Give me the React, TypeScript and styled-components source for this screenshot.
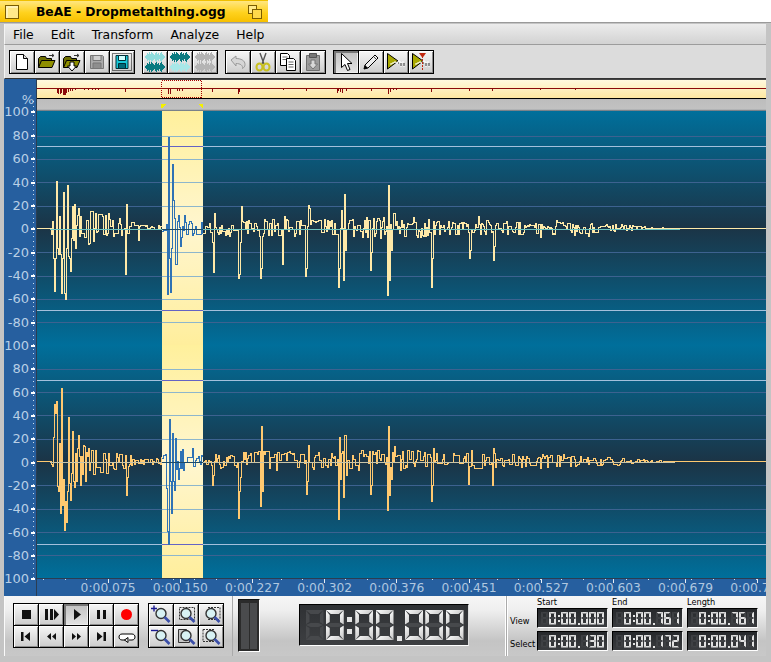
import React from 'react'
import styled, { createGlobalStyle } from 'styled-components'

const GlobalStyle = createGlobalStyle`
  html, body {
    margin: 0;
    padding: 0;
    background: #ffffff;
    overflow: hidden;
  }
  * {
    box-sizing: border-box;
  }
`

const Page = styled.div`
  width: 771px;
  height: 662px;
  display: flex;
  flex-direction: column;
  overflow: hidden;
  font-family: 'DejaVu Sans', sans-serif;
  color: #000;
`

const TitleTab = styled.div`
  width: 268px;
  height: 22px;
  flex: none;
  display: flex;
  align-items: center;
  justify-content: space-between;
  padding: 0 6px 0 5px;
  background: linear-gradient(#ffe680, #ffd21e 55%, #f7c000);
  border-top: 1px solid #f0c000;
`

const TitleText = styled.span`
  font-size: 12.3px;
  font-weight: 700;
  flex: 1;
  padding-left: 17px;
  white-space: pre;
`

const Frame = styled.div`
  flex: 1;
  min-height: 0;
  display: flex;
  flex-direction: column;
  padding: 1px 5px 6px 4px;
  background: #c4c4c4;
  border-top: 1px solid #9a9a9a;
`

const MenuBar = styled.div`
  height: 21px;
  flex: none;
  display: flex;
  align-items: center;
  padding-left: 8px;
  gap: 17px;
  font-size: 12.4px;
  background: linear-gradient(#ececec, #d2d2d2);
  border-left: 1px solid #f4f4f4;
  border-bottom: 1px solid #9c9c9c;
`

const ToolBar = styled.div`
  height: 34px;
  flex: none;
  display: flex;
  align-items: flex-start;
  padding: 5px 0 0 4px;
  gap: 7px;
  background: #dcdcdc;
  border-left: 1px solid #f4f4f4;
  border-bottom: 1px solid #333;
`

const ButtonGroup = styled.div<{ $columns: number; $height?: number }>`
  display: grid;
  grid-template-columns: repeat(${(p) => p.$columns}, 24px);
  grid-auto-rows: ${(p) => p.$height ?? 22}px;
  gap: 1px;
  padding: 1px;
  background: #000;
`

const Button = styled.div<{ $pressed?: boolean }>`
  display: flex;
  align-items: center;
  justify-content: center;
  background: ${(p) =>
    p.$pressed ? 'linear-gradient(#c0c0c0, #e4e4e4)' : 'linear-gradient(#f6f6f6, #cccccc)'};
  box-shadow: ${(p) =>
    p.$pressed
      ? 'inset 2px 2px 0 #777, inset -1px -1px 0 #eee'
      : 'inset 1px 1px 0 #fff, inset -1px -1px 0 #8c8c8c'};
`

const Workspace = styled.div`
  height: 517px;
  flex: none;
  display: flex;
`

const LeftRuler = styled.div`
  width: 33px;
  flex: none;
  background: #265f9f;
  border-right: 1px solid #2b3d52;
  overflow: hidden;
  color: #b9cfe6;
  font-size: 13px;
`

const PercentBox = styled.div`
  height: 21.8px;
  display: flex;
  align-items: flex-end;
  justify-content: flex-end;
  padding-right: 2px;
  line-height: 10px;
  transform: translateY(4px);
`

const ScaleRow = styled.div`
  height: 23.35px;
  display: flex;
  align-items: center;
  justify-content: flex-end;
  white-space: nowrap;
  padding-right: 1px;
  gap: 2px;
  line-height: 10px;
`

const ScaleTick = styled.i`
  display: block;
  width: 4px;
  height: 2px;
  flex: none;
  background: #fff;
`

const ScaleDots = styled.div`
  height: 0;
  position: relative;
`

const DotStrip = styled.div`
  position: absolute;
  right: 2px;
  top: 0;
  width: 1px;
  height: 480px;
  background: repeating-linear-gradient(#cfe0f0 0 1px, transparent 1px 4.67px);
`

const WaveColumn = styled.div`
  flex: 1;
  min-width: 0;
  display: flex;
  flex-direction: column;
  overflow: hidden;
`

const Overview = styled.div`
  height: 20px;
  flex: none;
  background: linear-gradient(#fff9de, #ffe8a2);
  border-bottom: 1px solid #000;
  border-top: 1px solid #444;
  display: flex;
`

const Strip = styled.div`
  height: 12px;
  flex: none;
  background: linear-gradient(#bdbdbd, #c2c2c2 85%, #5f6a74);
  display: flex;
`

const ChannelBox = styled.div<{ $height: number }>`
  height: ${(p) => p.$height}px;
  flex: none;
  background: linear-gradient(#006f9b, #1b3446 50%, #006f9b);
  display: flex;
`

const TimeRuler = styled.div`
  height: 18px;
  flex: none;
  display: flex;
  padding-left: 35px;
  background:
    repeating-linear-gradient(90deg, #d5e3f0 0 1px, transparent 1px 21.6px) 6px 0 / 100% 1px no-repeat,
    #265f9f;
  border-top: 1px solid #2b3d52;
  overflow: hidden;
`

const TimeCell = styled.div`
  width: 72.2px;
  flex: none;
  display: flex;
  flex-direction: column;
  align-items: center;
  color: #b0c8e0;
  font-size: 12.3px;
  line-height: 14px;
  white-space: nowrap;
`

const TimeTick = styled.i`
  display: block;
  width: 1px;
  height: 4px;
  margin-bottom: -2px;
  flex: none;
  background: #e6eef6;
`

const BottomPanel = styled.div`
  height: 60px;
  flex: none;
  display: flex;
  background: linear-gradient(#f6f6f6, #eeeeee 25%, #c4c4c4 75%, #c8c8c8);
  box-shadow: inset 1px 0 0 #fafafa;
`

const TransportSection = styled.div`
  width: 229px;
  flex: none;
  display: flex;
  align-items: flex-start;
  gap: 9px;
  padding: 7px 0 0 9px;
  border-right: 1px solid #aaaaaa;
`

const DisplaySection = styled.div`
  width: 273px;
  flex: none;
  display: flex;
  align-items: flex-start;
  padding: 3px 0 0 5px;
  gap: 39px;
  border-right: 1px solid #fff;
`

const Meter = styled.div`
  width: 22px;
  height: 53px;
  flex: none;
  display: flex;
  gap: 1px;
  padding: 3px 2px 2px;
  background: #2b2b2b;
  border: 1px solid;
  border-color: #111 #fff #fff #111;
`

const MeterBar = styled.i`
  flex: 1;
  background: #4a4b4d;
`

const BigLcd = styled.div`
  width: 170px;
  height: 42px;
  flex: none;
  margin-top: 5px;
  display: flex;
  align-items: center;
  gap: 1.25px;
  padding-left: 5px;
  background: linear-gradient(#2f3134, #3d3f42);
  border: 1px solid;
  border-color: #000 #ddd #fff #000;
`

const DigitCell = styled.span<{ $w: number; $h: number; $t: number }>`
  width: ${(p) => p.$w}px;
  height: ${(p) => p.$h}px;
  flex: none;
  display: grid;
  grid-template-columns: ${(p) => p.$t}px 1fr ${(p) => p.$t}px;
  grid-template-rows: ${(p) => p.$t}px 1fr ${(p) => p.$t}px 1fr ${(p) => p.$t}px;
  --t: ${(p) => p.$t}px;
`

type SegName = 'a' | 'b' | 'c' | 'd' | 'e' | 'f' | 'g'

const segmentShape: Record<SegName, string> = {
  a: 'grid-area: 1 / 1 / 2 / 4; clip-path: polygon(0 0, 100% 0, calc(100% - var(--t)) 100%, var(--t) 100%);',
  d: 'grid-area: 5 / 1 / 6 / 4; clip-path: polygon(var(--t) 0, calc(100% - var(--t)) 0, 100% 100%, 0 100%);',
  g: 'grid-area: 3 / 1 / 4 / 4; clip-path: polygon(0 50%, var(--t) 0, calc(100% - var(--t)) 0, 100% 50%, calc(100% - var(--t)) 100%, var(--t) 100%);',
  f: 'grid-area: 1 / 1 / 4 / 2; clip-path: polygon(0 0, 100% var(--t), 100% calc(100% - var(--t)), 0 calc(100% - var(--t) / 2));',
  b: 'grid-area: 1 / 3 / 4 / 4; clip-path: polygon(100% 0, 0 var(--t), 0 calc(100% - var(--t)), 100% calc(100% - var(--t) / 2));',
  e: 'grid-area: 3 / 1 / 6 / 2; clip-path: polygon(0 calc(var(--t) / 2), 100% var(--t), 100% calc(100% - var(--t)), 0 100%);',
  c: 'grid-area: 3 / 3 / 6 / 4; clip-path: polygon(100% calc(var(--t) / 2), 0 var(--t), 0 calc(100% - var(--t)), 100% 100%);',
}

const Segment = styled.i<{ $seg: SegName; $on: boolean; $big?: boolean }>`
  display: block;
  ${(p) => segmentShape[p.$seg]}
  ${(p) => (p.$big ? 'margin: 0.5px;' : '')}
  background: ${(p) =>
    !p.$on
      ? p.$big
        ? '#47494c'
        : '#3f4144'
      : p.$big
        ? 'linear-gradient(135deg, #ffffff, #c4c4c4)'
        : '#e2e2e2'};
`

const ColonCell = styled.span<{ $w: number; $h: number; $dot: number; $point?: boolean }>`
  width: ${(p) => p.$w}px;
  height: ${(p) => p.$h}px;
  flex: none;
  display: flex;
  flex-direction: column;
  align-items: center;
  justify-content: ${(p) => (p.$point ? 'flex-end' : 'space-evenly')};
  i {
    display: block;
    width: ${(p) => p.$dot}px;
    height: ${(p) => p.$dot}px;
    background: #e4e4e4;
  }
`

const SelectionSection = styled.div`
  flex: 1;
  display: grid;
  grid-template-columns: 26px 71px 71px 71px;
  grid-template-rows: 10px 20px 21px;
  column-gap: 4px;
  row-gap: 2px;
  font-size: 8.2px;
  border-left: 1px solid #aaa;
  box-shadow: inset 1px 0 0 #fff;
  align-items: end;
`

const ColumnLabel = styled.span`
  align-self: center;
  padding-top: 1px;
  line-height: 10px;
`

const RowLabel = styled.span`
  padding: 0 0 2px 3px;
  white-space: nowrap;
  line-height: 10px;
`

const SmallLcd = styled.div`
  height: 20px;
  display: flex;
  align-items: center;
  gap: 1px;
  padding-left: 3px;
  background: linear-gradient(#26282b, #3a3c3f);
  border: 1px solid;
  border-color: #000 #eee #fff #000;
`

const digitSegments: Record<string, string> = {
  '0': 'abcdef',
  '1': 'bc',
  '2': 'abdeg',
  '3': 'abcdg',
  '4': 'bcfg',
  '5': 'acdfg',
  '6': 'acdefg',
  '7': 'abc',
  '8': 'abcdefg',
  '9': 'abcdfg',
  ' ': '',
}

const allSegments: SegName[] = ['a', 'b', 'c', 'd', 'e', 'f', 'g']

// seven segment readout, the unlit segments stay visible as on the real display
function Readout({ value, big }: { value: string; big?: boolean }) {
  const w = big ? 19 : 7
  const h = big ? 31 : 13
  const t = big ? 5 : 2
  return (
    <>
      {value.split('').map((ch, i) =>
        ch === ':' || ch === '.' ? (
          <ColonCell
            key={i}
            $w={big ? 8 : 3}
            $h={h}
            $dot={big ? 5 : 2}
            $point={ch === '.'}
          >
            <i />
            {ch === ':' && <i />}
          </ColonCell>
        ) : (
          <DigitCell key={i} $w={w} $h={h} $t={t}>
            {allSegments.map((s) => (
              <Segment
                key={s}
                $seg={s}
                $big={big}
                $on={digitSegments[ch].includes(s)}
              />
            ))}
          </DigitCell>
        ),
      )}
    </>
  )
}

/* ---------- waveform data ---------- */

type Spike = [number, number]

const envelopePoints: [number, number][] = [
  [37, 0], [50, 0], [52, 14], [75, 24], [100, 16], [125, 8], [140, 3], [160, 5],
  [175, 12], [200, 7], [215, 8], [260, 11], [300, 9], [340, 10], [400, 12], [450, 8],
  [500, 8], [560, 7], [620, 4], [655, 1], [680, 0], [766, 0],
]

function envelope(x: number) {
  for (let i = 1; i < envelopePoints.length; i++) {
    const [x1, a1] = envelopePoints[i]
    const [x0, a0] = envelopePoints[i - 1]
    if (x <= x1) return a0 + ((a1 - a0) * (x - x0)) / (x1 - x0)
  }
  return 0
}

const spikesTop: Spike[] = [
  [52, -7], [53, 30], [54, 63], [55, 30], [56, -47], [57, 20], [58, 26], [59, -12], [60, 26], [61, 65], [62, 30], [63, -36],
  [64, 65], [65, 71], [66, 20], [67, -43], [68, 28], [69, 30], [70, 43], [71, 10], [72, -22], [73, 12], [74, -24], [75, 20],
  [125, 46], [126, -24], [108, -15], [138, 12],
  [167, 66], [168, -91], [169, 30], [170, 64], [171, 20], [172, -64], [173, -28], [175, 36], [176, 36], [178, -13], [180, 18], [184, -13],
  [212, 14], [213, 44], [214, -15], [238, 50], [239, 46], [240, 14], [241, -22], [260, 50], [261, 40], [282, 36], [284, -12],
  [305, 48], [306, 40], [308, -23], [309, -20], [338, 59], [339, 40], [341, -18], [343, 52], [344, -34], [345, 22], [370, 42], [371, 24],
  [387, 67], [388, -43], [389, 52], [391, 22], [393, -15], [394, -15], [431, 59], [432, 30], [433, -7], [469, 30], [470, 22], [478, -12], [493, 32], [494, 18],
  [540, 9], [556, -8], [574, 7], [588, 8], [606, -4],
]

const spikesBottom: Spike[] = [
  [52, 5], [53, -24], [54, -57], [55, -48], [56, -60], [57, 25], [58, 30], [59, -18], [60, 52], [61, -73], [62, 44], [63, 18], [64, 69], [65, 40],
  [66, 61], [67, 30], [68, -44], [69, 22], [70, 39], [71, 12], [72, -30], [73, 20], [74, 26], [76, 20], [78, -26], [80, 24], [83, -16], [85, 20],
  [126, 34], [127, 16], [125, -6], [108, -8],
  [166, 27], [167, 70], [168, 83], [169, -42], [170, 20], [171, 52], [172, -28], [173, 20], [174, 29], [175, -23], [178, 18], [180, -10], [182, -12], [192, -13],
  [212, 24], [213, 14], [238, 57], [239, 30], [240, 16], [243, -9], [260, 45], [261, -35], [262, 30], [263, -10],
  [306, 33], [307, 20], [308, -16], [338, 58], [339, -24], [340, 18], [343, 36], [344, -26], [345, -26], [346, 14], [370, 33], [371, 24],
  [387, 49], [388, -35], [389, 34], [391, 18], [394, -15], [402, -10], [431, 40], [432, 24], [433, -13], [468, 23], [471, -11], [492, 24], [493, -13],
  [540, 7], [560, -5], [580, -5],
]

function buildSamples(spikes: Spike[], seed: number) {
  let state = seed
  const random = () => {
    state = (state * 16807) % 2147483647
    return state / 2147483647
  }
  const samples: number[] = []
  for (let x = 0; x < 766; x++) {
    const amp = envelope(x)
    const roll = random()
    // mostly above the centre line, with short drops below it
    const value = roll < 0.38 ? random() * amp * 0.9 : -random() * amp
    const hold = random() < 0.28 && x > 0
    samples.push(hold ? samples[x - 1] : Math.round(value))
  }
  spikes.forEach(([x, v]) => {
    samples[x] = v
  })
  return samples
}

function stepPath(samples: number[], cy: number, from: number, to: number) {
  let d = `M${from} ${cy + samples[from] + 0.5}`
  for (let x = from; x < to; x++) {
    d += `V${cy + samples[x] + 0.5}H${x + 1}`
  }
  return d
}

const SEL_X0 = 162 - 37
const SEL_X1 = 203 - 37
const WAVE_W = 729

function Channel({
  id,
  height,
  center,
  spikes,
  seed,
  color,
  centerColor,
  centerEnd,
}: {
  id: string
  height: number
  center: number
  spikes: Spike[]
  seed: number
  color: string
  centerColor: string
  centerEnd: number
}) {
  const samples = buildSamples(spikes, seed)
  // spike tables are in screen x, the drawing starts at the ruler edge
  const local = samples.slice(37)
  const levels = [-4, -3, -2, -1, 1, 2, 3, 4].map((k) => Math.round(center + k * 23.35) + 0.5)
  return (
    <svg width={WAVE_W} height={height} shapeRendering="crispEdges">
      <defs>
        <linearGradient id={id} x1="0" x2="0" y1="0" y2="1">
          <stop offset="0" stopColor="#fff09c" />
          <stop offset="0.5" stopColor="#fff6cf" />
          <stop offset="1" stopColor="#ffee9c" />
        </linearGradient>
      </defs>
      <rect x={SEL_X0} width={SEL_X1 - SEL_X0} height={height} fill={`url(#${id})`} />
      {levels.map((y) => (
        <g key={y}>
          <path d={`M0 ${y}H${WAVE_W}`} stroke="#3d6290" />
          <path d={`M${SEL_X0} ${y}H${SEL_X1}`} stroke="#8db6cc" />
        </g>
      ))}
      {[35.5, 199.5].map((y) => (
        <g key={y}>
          <path d={`M0 ${y}H${WAVE_W}`} stroke="#a3c0dc" />
          <path d={`M${SEL_X0} ${y}H${SEL_X1}`} stroke="#6464c4" />
        </g>
      ))}
      <path d={stepPath(local, center - 1, 0, SEL_X0)} stroke={color} fill="none" />
      <path d={stepPath(local, center - 1, SEL_X0, SEL_X1)} stroke="#2f72b4" fill="none" />
      <path d={stepPath(local, center - 1, SEL_X1, WAVE_W)} stroke={color} fill="none" />
      <path d={`M13 ${center + 0.5}H${SEL_X0}M${SEL_X1} ${center + 0.5}H${centerEnd}`} stroke={centerColor} />
      <path d={`M${SEL_X0} ${center + 0.5}H${SEL_X1}`} stroke="#1d4a68" />
    </svg>
  )
}

const overviewMarks: [number, number][] = [
  [57, 4], [58, 5], [60, 5], [61, 4], [63, 6], [64, 6], [65, 6], [66, 4], [68, 3], [70, 2], [72, 2], [75, 1],
  [84, 1], [88, 1], [92, 1], [95, 1], [98, 1], [125, 3], [168, 5], [170, 5], [177, 2], [179, 2], [182, 2],
  [212, 3], [238, 5], [239, 3], [283, 1], [306, 2], [337, 4], [338, 2], [340, 3], [342, 4], [346, 2], [371, 2],
  [388, 5], [390, 3], [393, 1], [396, 1], [431, 3], [469, 2], [492, 2], [540, 1], [575, 1],
]

function OverviewTrace() {
  const marks = overviewMarks.map(([x, h]) => `M${x - 37 + 0.5} 8V${9 + h}`).join('')
  return (
    <svg width={WAVE_W} height={18} shapeRendering="crispEdges">
      <path d={`M0 8.5H${WAVE_W}`} stroke="#8b0a0a" />
      <path d={marks} stroke="#8b0a0a" />
      <rect x={124.5} y={0.5} width={40} height={17} fill="none" stroke="#a80000" strokeDasharray="1 1" />
    </svg>
  )
}

function StripMarkers() {
  return (
    <svg width={WAVE_W} height={11} shapeRendering="crispEdges">
      <path d="M124 5h5l-4 4h-1z M162 5h4v4h-1z" fill="#f4f000" />
    </svg>
  )
}

/* ---------- icons ---------- */

function Icon({ children }: { children: React.ReactNode }) {
  return (
    <svg width={20} height={20} viewBox="0 0 20 20">
      {children}
    </svg>
  )
}

const NewIcon = () => (
  <Icon>
    <path d="M4.5 2.5h7l4 4v11h-11z" fill="#fff" stroke="#000" />
    <path d="M11.5 2.5v4h4" fill="#ddd" stroke="#000" />
  </Icon>
)

const OpenIcon = ({ arrow }: { arrow?: boolean }) => (
  <Icon>
    <path d="M12 3.5h5M17 3.5l-2 -1.5M17 3.5l-2 1.5" stroke="#333" strokeWidth="1" fill="none" />
    <path d="M1.5 15.5v-9l2-2h5l1 2h5v2" fill="#6e6e00" stroke="#000" />
    <path d="M1.5 15.5l3-7h13.5l-3 7z" fill="#8f8f00" stroke="#000" />
    {arrow && <path d="M8 10h4v4h2.5l-4.5 5-4.5-5H8z" fill="#fff" stroke="#000" />}
  </Icon>
)

const SaveGreyIcon = () => (
  <Icon>
    <path d="M3.5 3.5h12l1 1v12h-13z" fill="#aaa" stroke="#777" />
    <path d="M6 3.5h8v5H6z" fill="#cfcfcf" stroke="#777" />
    <path d="M6 11h8v5.5H6z" fill="#8e8e8e" stroke="#777" />
  </Icon>
)

const SaveBlueIcon = () => (
  <Icon>
    <rect x="0.5" y="1.5" width="19" height="17" fill="none" stroke="#000" strokeDasharray="1 1" />
    <path d="M4 3.5h12v13H4z" fill="#18c8d8" stroke="#003038" />
    <path d="M6.5 3.5h7v5h-7z" fill="#d0ffff" stroke="#003038" />
    <path d="M6.5 11.5h7v5h-7z" fill="#006a78" stroke="#003038" />
  </Icon>
)

const waveHeights = [1, 2, 4, 3, 5, 3, 5, 4, 3, 2, 4, 5, 3, 4, 2, 4, 5, 3, 2, 1]

function WaveStrip({ y, color }: { y: number; color: string }) {
  const d = waveHeights.map((h, i) => `M${i + 0.5} ${y - h}V${y + h}`).join('')
  return <path d={d} stroke={color} fill="none" />
}

const WaveIcon = ({ top, bottom }: { top: string; bottom: string }) => (
  <svg width={22} height={20} viewBox="0 0 20 20" shapeRendering="crispEdges">
    <WaveStrip y={5} color={top} />
    <WaveStrip y={15} color={bottom} />
  </svg>
)

const UndoIcon = () => (
  <Icon>
    <path d="M3 8l5-4v2.5c5 0 9 2 9 6 0 2-1 3-2.5 4 .5-3-2-5-6.5-5V14z" fill="#d6d6d6" stroke="#999" />
  </Icon>
)

const CutIcon = () => (
  <Icon>
    <path d="M7 1l4 11M13 1l-4 11" stroke="#555" strokeWidth="1.4" fill="none" />
    <ellipse cx="6.5" cy="15" rx="3" ry="3.5" fill="none" stroke="#c8c020" strokeWidth="2" />
    <ellipse cx="13.5" cy="15" rx="3" ry="3.5" fill="none" stroke="#c8c020" strokeWidth="2" />
  </Icon>
)

const CopyIcon = () => (
  <Icon>
    <path d="M2.5 1.5h7l2 2v10h-9z" fill="#fff" stroke="#000" />
    <path d="M4.5 5h5M4.5 7.5h5" stroke="#666" />
    <path d="M8.5 6.5h7l2 2v10h-9z" fill="#fff" stroke="#000" />
    <path d="M10.5 10h5M10.5 12.5h5M10.5 15h5" stroke="#666" />
  </Icon>
)

const PasteIcon = () => (
  <Icon>
    <path d="M3.5 3.5h13v15h-13z" fill="#9c9c9c" stroke="#6e6e6e" />
    <path d="M6.5 1.5h7v4h-7z" fill="#777" stroke="#555" />
    <path d="M8 8h4v4h2.5L10 17l-4.5-5H8z" fill="#d8d8d8" stroke="#777" />
  </Icon>
)

const ArrowIcon = () => (
  <Icon>
    <path d="M5.5 1.5v14l3.5-3 2.5 6 2.5-1-2.5-6h4.5z" fill="#fff" stroke="#000" />
  </Icon>
)

const PencilIcon = () => (
  <Icon>
    <path d="M3 17l1-4L14 3l3 3L7 16z" fill="#eee" stroke="#000" />
    <path d="M3 17l1-4 3 3z" fill="#000" />
    <path d="M12.5 4.5l3 3" stroke="#444" />
  </Icon>
)

const TrimIcon = ({ marker }: { marker?: boolean }) => (
  <Icon>
    <path d="M1.5 1.5L12 9 1.5 17z" fill="#a8a800" stroke="#000" />
    <path d="M4 12h2v-1h2v-1h2v1h2v-2h2v2h2v-1h2M15 12v3M18 12v3" stroke="#fff" fill="none" />
    <path d="M12 11h1M15 11v3M18 11v3" stroke="#333" fill="none" />
    {marker && (
      <>
        <path d="M8 1h7l-3.5 5z" fill="#c02810" />
        <path d="M11.5 4v15" stroke="#c02810" strokeDasharray="2 1" />
      </>
    )}
  </Icon>
)

const glyph = '#111'

const transportIcons: React.ReactNode[] = [
  <path key="s" d="M5 5h9v9H5z" fill={glyph} />,
  <path key="sp" d="M3 4h3v11H3zM8 4h3v11H8zM12 4l5 5.5-5 5.5z" fill={glyph} />,
  <path key="p" d="M7 4l7 5.5-7 5.5z" fill={glyph} />,
  <path key="pa" d="M5 5h3v9H5zM11 5h3v9h-3z" fill={glyph} />,
  <circle key="r" cx="9.5" cy="9.5" r="5.5" fill="#ff0000" />,
  <path key="pr" d="M4 5h2.5v9H4zM13 5v9L7.5 9.5z" fill={glyph} />,
  <path key="rw" d="M9 6v7L5 9.5zM14 6v7l-4-3.5z" fill={glyph} />,
  <path key="ff" d="M5 6v7l4-3.5zM10 6v7l4-3.5z" fill={glyph} />,
  <path key="nx" d="M5 5v9l5.5-4.5zM11.5 5H14v9h-2.5z" fill={glyph} />,
  <path
    key="lp"
    d="M8 13H5c-4 0-4-6 0-6h10c4 0 4 6 0 6h-3M11 10.5L7.5 13l3.5 2.5z"
    fill="#fff"
    stroke="#000"
  />,
]

type ZoomKind = 'in' | 'out' | 'sel' | 'page' | 'left' | 'right'

const ZoomIcon = ({ kind }: { kind: ZoomKind }) => (
  <svg width={24} height={21} viewBox="0 0 24 21">
    {kind === 'sel' && <rect x="5.5" y="3.5" width="15" height="12" fill="none" stroke="#333" strokeDasharray="2 1" />}
    {kind === 'page' && <path d="M4.5 3.5h8l3 3v10h-11z" fill="#c8c8c8" stroke="#333" />}
    {kind === 'left' && <path d="M9 3.5h12M9 15.5h12M21 3.5v12" fill="none" stroke="#333" strokeDasharray="2 1" />}
    {kind === 'right' && <path d="M15 3.5H4M15 15.5H4M4 3.5v12" fill="none" stroke="#333" strokeDasharray="2 1" />}
    {kind === 'in' && <path d="M2 4.5h6M5 1.5v6" stroke="#1a1a90" strokeWidth="1.4" />}
    {kind === 'out' && <path d="M2 4.5h7" stroke="#1a1a90" strokeWidth="1.4" />}
    <circle cx="12" cy="9.5" r="5" fill="#d8f2f4" stroke="#333" strokeWidth="1.4" />
    <path d="M15.5 13l5 5" stroke="#3a4ea8" strokeWidth="2.6" />
  </svg>
)

/* ---------- page data ---------- */

const scaleLabels = [
  '100', '80', '60', '40', '20', '0', '-20', '-40', '-60', '-80',
  '100', '80', '60', '40', '20', '0', '-20', '-40', '-60', '-80', '100',
]

const timeLabels = [
  '0:00.075', '0:00.150', '0:00.227', '0:00.302', '0:00.376',
  '0:00.451', '0:00.527', '0:00.603', '0:00.679', '0:00.754',
]

const menus = ['File', 'Edit', 'Transform', 'Analyze', 'Help']

const toolGroups: { icon: React.ReactNode; pressed?: boolean }[][] = [
  [
    { icon: <NewIcon /> },
    { icon: <OpenIcon /> },
    { icon: <OpenIcon arrow /> },
    { icon: <SaveGreyIcon /> },
    { icon: <SaveBlueIcon /> },
  ],
  [
    { icon: <WaveIcon top="#8fdcdc" bottom="#0a7a80" /> },
    { icon: <WaveIcon top="#0a7a80" bottom="#a8e8e8" /> },
    { icon: <WaveIcon top="#b4b4b4" bottom="#b4b4b4" /> },
  ],
  [
    { icon: <UndoIcon /> },
    { icon: <CutIcon /> },
    { icon: <CopyIcon /> },
    { icon: <PasteIcon /> },
  ],
  [
    { icon: <ArrowIcon />, pressed: true },
    { icon: <PencilIcon /> },
    { icon: <TrimIcon /> },
    { icon: <TrimIcon marker /> },
  ],
]

const zoomKinds: ZoomKind[] = ['in', 'sel', 'left', 'out', 'page', 'right']

const readouts = [
  { row: 'View', values: [' 0:00.000', ' 0:00.761', ' 0:00.761'] },
  { row: 'Select', values: [' 0:00.130', ' 0:00.172', ' 0:00.041'] },
]

export default function App() {
  return (
    <Page>
      <GlobalStyle />
      <TitleTab>
        <svg width={14} height={14} viewBox="0 0 14 14">
          <rect x="0.5" y="0.5" width="13" height="13" fill="#ffe98a" stroke="#7a5c00" />
          <path d="M1 1h12v2H3v10H1z" fill="#fff3b8" />
        </svg>
        <TitleText>BeAE - Dropmetalthing.ogg</TitleText>
        <svg width={14} height={14} viewBox="0 0 14 14">
          <rect x="0.5" y="0.5" width="8" height="8" fill="#ffe98a" stroke="#7a5c00" />
          <rect x="4.5" y="4.5" width="9" height="9" fill="#ffd94a" stroke="#7a5c00" />
        </svg>
      </TitleTab>
      <Frame>
        <MenuBar>
          {menus.map((m) => (
            <span key={m}>{m}</span>
          ))}
        </MenuBar>
        <ToolBar>
          {toolGroups.map((group, i) => (
            <ButtonGroup key={i} $columns={group.length}>
              {group.map((b, j) => (
                <Button key={j} $pressed={b.pressed}>
                  {b.icon}
                </Button>
              ))}
            </ButtonGroup>
          ))}
        </ToolBar>
        <Workspace>
          <LeftRuler>
            <PercentBox>%</PercentBox>
            <ScaleDots>
              <DotStrip />
            </ScaleDots>
            {scaleLabels.map((label, i) => (
              <ScaleRow key={i}>
                {label}
                <ScaleTick />
              </ScaleRow>
            ))}
          </LeftRuler>
          <WaveColumn>
            <Overview>
              <OverviewTrace />
            </Overview>
            <Strip>
              <StripMarkers />
            </Strip>
            <ChannelBox $height={234}>
              <Channel
                id="sel-top"
                height={234}
                center={118}
                spikes={spikesTop}
                seed={4711}
                color="#ffe9a8"
                centerColor="#6cc4c0"
                centerEnd={643}
              />
            </ChannelBox>
            <ChannelBox $height={233}>
              <Channel
                id="sel-bottom"
                height={233}
                center={117}
                spikes={spikesBottom}
                seed={90210}
                color="#ffc970"
                centerColor="#c8c4a8"
                centerEnd={638}
              />
            </ChannelBox>
            <TimeRuler>
              {timeLabels.map((t) => (
                <TimeCell key={t}>
                  <TimeTick />
                  {t}
                </TimeCell>
              ))}
            </TimeRuler>
          </WaveColumn>
        </Workspace>
        <BottomPanel>
          <TransportSection>
            <ButtonGroup $columns={5} $height={21}>
              {transportIcons.map((icon, i) => (
                <Button key={i} $pressed={i === 2}>
                  <svg width={19} height={19} viewBox="0 0 19 19">
                    {icon}
                  </svg>
                </Button>
              ))}
            </ButtonGroup>
            <ButtonGroup $columns={3} $height={21}>
              {zoomKinds.map((kind) => (
                <Button key={kind}>
                  <ZoomIcon kind={kind} />
                </Button>
              ))}
            </ButtonGroup>
          </TransportSection>
          <DisplaySection>
            <Meter>
              <MeterBar />
              <MeterBar />
            </Meter>
            <BigLcd role="img" aria-label="0:00.000">
              <Readout value=" 0:00.000" big />
            </BigLcd>
          </DisplaySection>
          <SelectionSection>
            <span />
            <ColumnLabel>Start</ColumnLabel>
            <ColumnLabel>End</ColumnLabel>
            <ColumnLabel>Length</ColumnLabel>
            {readouts.map((r) => (
              <React.Fragment key={r.row}>
                <RowLabel>{r.row}</RowLabel>
                {r.values.map((v, i) => (
                  <SmallLcd key={i} role="img" aria-label={v.trim()}>
                    <Readout value={v} />
                  </SmallLcd>
                ))}
              </React.Fragment>
            ))}
          </SelectionSection>
        </BottomPanel>
      </Frame>
    </Page>
  )
}
